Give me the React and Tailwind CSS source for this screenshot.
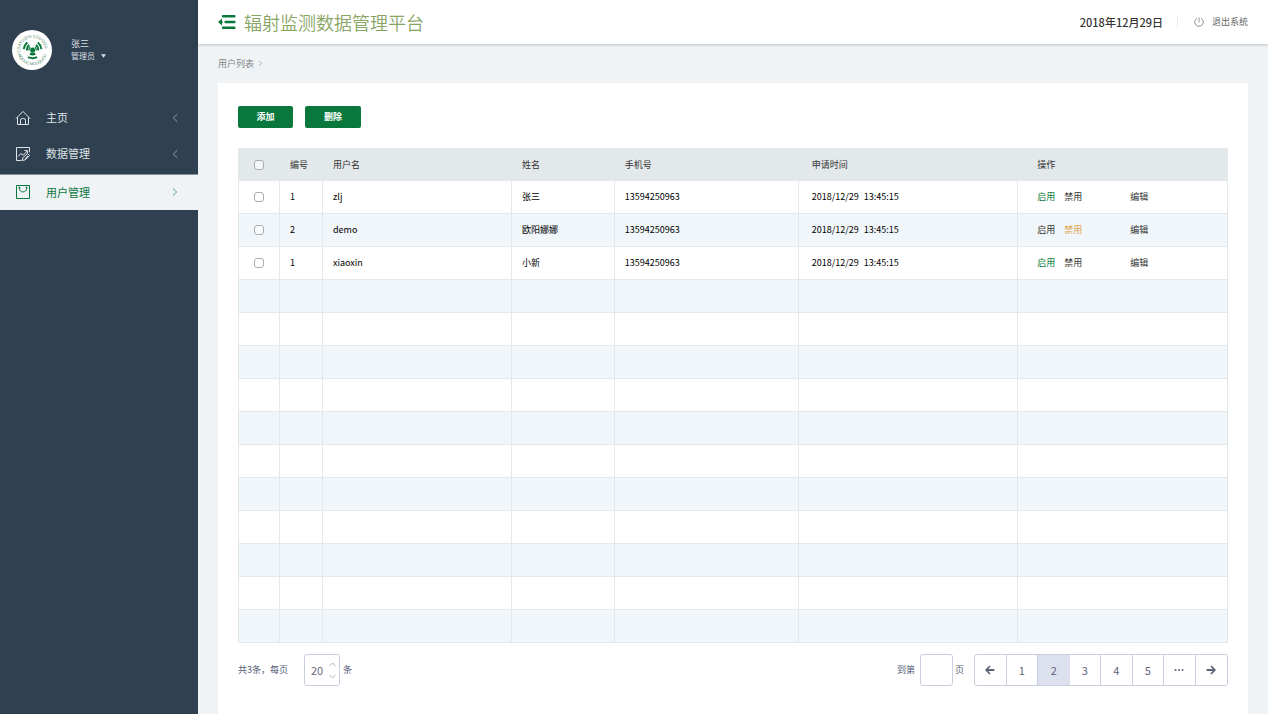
import React, { useState } from "react";

const users = [
  { no: "1", account: "zlj", name: "张三", phone: "13594250963", date: "2018/12/29", time: "13:45:15", enabled: true },
  { no: "2", account: "demo", name: "欧阳娜娜", phone: "13594250963", date: "2018/12/29", time: "13:45:15", enabled: false },
  { no: "1", account: "xiaoxin", name: "小新", phone: "13594250963", date: "2018/12/29", time: "13:45:15", enabled: true },
];
const emptyRows = Array.from({ length: 11 }, (_, i) => i);

function Logo() {
  return (
    <svg viewBox="0 0 40 40" className="size-10 shrink-0" aria-hidden="true">
      <defs>
        <path id="ring-top" d="M8 20a12.5 12.5 0 0 1 25 0" />
        <path id="ring-bottom" d="M5.4 20a15.1 15.1 0 0 0 30.2 0" />
      </defs>
      <circle cx="20" cy="20" r="20" fill="#fff" />
      <g fontFamily="Liberation Sans, sans-serif" fontSize="4" fill="#4c8564">
        <text><textPath href="#ring-top" startOffset="1%">DAYUQIG COUGOU</textPath></text>
        <text><textPath href="#ring-bottom" startOffset="2%">CAIQOUC MOUQUCO</textPath></text>
      </g>
      <circle cx="20.6" cy="20" r="2.5" fill="#0a783c" />
      <path d="M18.6 22.6h4l1.2 2.2q-3.2 1.4-6.4 0z" fill="#0a783c" />
      <g fill="none" stroke="#0a783c" strokeWidth="2">
        <path d="M17 20.6a4 4 0 0 1 1.2-3.6M24.2 20.6a4 4 0 0 0-1.2-3.6" strokeWidth="1.2" />
        <path d="M15 20.4a6.4 6.4 0 0 1 2.3-5.4M26.2 20.4a6.4 6.4 0 0 0-2.3-5.4" />
        <path d="M11.8 19.2a10 10 0 0 1 3.6-6.6M29.4 19.2a10 10 0 0 0-3.6-6.6" />
        <path d="M16 27.2q4.6 2 9.2 0" />
      </g>
    </svg>
  );
}

function HomeIcon() {
  return (
    <svg viewBox="0 0 16 16" className="size-4" fill="none" stroke="currentColor" strokeWidth="1" aria-hidden="true">
      <path d="M1.2 8.4 8 1.4l6.8 7M2.5 7.5v7h11v-7M5.5 14.3v-4.1q0-1.7 1.7-1.7h1.6q1.7 0 1.7 1.7v4.1" strokeLinejoin="round" strokeLinecap="round" />
    </svg>
  );
}

function DataIcon() {
  return (
    <svg viewBox="0 0 16 16" className="size-4" fill="none" stroke="currentColor" strokeWidth="1" strokeLinejoin="round" strokeLinecap="round" aria-hidden="true">
      <path d="M14.5 6V1.5h-13v13h4.6" />
      <path d="m3.3 10.2 2.4-2.6 2.6 1.6L12.2 5M9.8 4.6h2.6v2.6" />
      <path d="m8 11.6 4.6-4 2 2-4.5 4.3-2.5.5zM10.2 12.6l2.6-2.5" />
    </svg>
  );
}

function UserIcon() {
  return (
    <svg viewBox="0 0 16 16" className="size-4" fill="none" stroke="currentColor" strokeWidth="1" strokeLinejoin="round" aria-hidden="true">
      <path d="M1.5 1.5h13v13h-13z" />
      <path d="M4.4 4.2c.2 5 7 5 7.2 0" />
      <path d="M3.6 3.6h1.6M10.8 3.6h1.6" strokeWidth="1.6" />
    </svg>
  );
}

function Chevron({ d, className }) {
  return (
    <svg viewBox="0 0 8 8" className={className} fill="none" stroke="currentColor" strokeWidth="0.9" aria-hidden="true">
      <path d={d} />
    </svg>
  );
}
const LEFT = "M6.2 .4 2.2 4 6.2 7.6";
const RIGHT = "M1.8 .4 5.8 4 1.8 7.6";
const UP = "M.4 6 4 2.2 7.6 6";
const DOWN = "M.4 2 4 5.8 7.6 2";

function Arrow({ left }) {
  return (
    <svg viewBox="0 0 10 10" className="size-[10px]" fill="none" stroke="currentColor" strokeWidth="1.8" aria-hidden="true">
      {left ? <path d="M9.4 5H1.6M5 1 1.2 5 5 9" /> : <path d="M.6 5h7.8M5 1l3.8 4L5 9" />}
    </svg>
  );
}

function NavItem({ icon, label, active }) {
  return (
    <a
      href="#"
      aria-current={active ? "page" : undefined}
      className={
        active
          ? "mt-[2px] flex h-9 items-center border-t border-[#8392a0] bg-[#f0f3f6] pb-px pl-[15px] pr-[19px] text-[#0a783c]"
          : "flex h-9 items-center pb-px pl-[15px] pr-[19px] text-[#dfe4e8]"
      }
    >
      {icon}
      <span className="ml-[15px] flex-1 pb-px text-[11px] leading-4">{label}</span>
      <Chevron d={active ? RIGHT : LEFT} className={active ? "size-2 text-[#4f9c73]" : "size-2 text-[#94a1ad]"} />
    </a>
  );
}

function Check({ label }) {
  return (
    <input
      type="checkbox"
      aria-label={label}
      className="mx-auto block size-[10px] appearance-none rounded-[3px] border border-[#a9adb0] bg-white/60 checked:bg-[#0a783c]"
    />
  );
}

const cell = "border-b border-r border-[#e3e9eb] pl-[10px] text-left";
const head = "pl-[10px] text-left font-normal";
const page = "flex items-center justify-center border-r border-[#c9cfde] last:border-r-0";

export default function App() {
  const [size, setSize] = useState(20);
  return (
    <div className="flex min-h-screen bg-[#eff3f6] font-['Noto_Sans_CJK_SC',sans-serif] text-[9px] leading-3 text-[#333]">
      <aside className="w-[198px] shrink-0 bg-[#2f4050]">
        <div className="flex h-[100px] items-center gap-[19px] pl-3 text-[#d9dee3]">
          <Logo />
          <div>
            <div className="text-[9px] leading-3">张三</div>
            <button type="button" className="flex items-center gap-[6px] text-[8px] leading-3">
              管理员
              <svg viewBox="0 0 6 4" className="h-1 w-[5px]" fill="currentColor" aria-hidden="true"><path d="M0 0h6L3 4z" /></svg>
            </button>
          </div>
        </div>
        <nav>
          <NavItem icon={<HomeIcon />} label="主页" />
          <NavItem icon={<DataIcon />} label="数据管理" />
          <NavItem icon={<UserIcon />} label="用户管理" active />
        </nav>
      </aside>

      <div className="flex min-w-0 flex-1 flex-col">
        <header className="flex h-11 items-center bg-white px-5 shadow-[0_1px_3px_rgba(0,0,0,0.2)]">
          <button type="button" aria-label="收起菜单" className="text-[#0a783c]">
            <svg viewBox="0 0 18 14" className="h-[14px] w-[18px]" fill="currentColor" aria-hidden="true">
              <path d="M0 7l4-3.4v6.8z" />
              <path d="M5 1.2h11.4M7.6 7h8.8M5 12.8h11.4" fill="none" stroke="currentColor" strokeWidth="2.4" strokeLinecap="round" />
              <path d="M3 6.4h2v1.2H3z" />
            </svg>
          </button>
          <h1 className="ml-2 flex-1 text-[18px] font-[350] leading-6 text-[#87a562]">辐射监测数据管理平台</h1>
          <time className="text-[11px] font-medium leading-4 text-[#333]">2018年12月29日</time>
          <span className="ml-[14px] h-3 w-px bg-[#eceef0]" />
          <button type="button" className="ml-4 flex items-center gap-2 text-[#666]">
            <svg viewBox="0 0 10 10" className="size-[10px]" fill="none" stroke="#888" strokeWidth=".9" aria-hidden="true">
              <path d="M3 1.2a4.3 4.3 0 1 0 4 0M5 .4v5" />
            </svg>
            退出系统
          </button>
        </header>

        <div className="flex h-[39px] items-center gap-1 px-5 text-[#858585]">
          <a href="#">用户列表</a>
          <Chevron d={RIGHT} className="size-[5px]" />
        </div>

        <main className="mx-5 flex-1 bg-white px-5 pb-7 pt-[23px]">
          <div className="flex gap-3 font-bold text-white">
            <button type="button" className="h-[22px] w-[55px] rounded-[2px] bg-[#0a783c]">添加</button>
            <button type="button" className="h-[22px] w-[56px] rounded-[2px] bg-[#0a783c]">删除</button>
          </div>

          <table className="mt-5 w-full table-fixed border-separate border-spacing-0 border-l border-[#e3e9eb] text-black">
            <colgroup>
              <col className="w-[41px]" />
              <col className="w-[43px]" />
              <col className="w-[19.1%]" />
              <col className="w-[10.4%]" />
              <col className="w-[18.6%]" />
              <col className="w-[22.2%]" />
              <col />
            </colgroup>
            <thead className="bg-[#e3e8eb] text-[#333]">
              <tr className="h-[33px]">
                <th className="border-r border-transparent p-0"><Check label="全选" /></th>
                <th className={head}>编号</th>
                <th className={head}>用户名</th>
                <th className={head}>姓名</th>
                <th className={head}>手机号</th>
                <th className={head}>
                  <span className="pl-[3px]">申请时间</span>
                </th>
                <th className={head}><span className="pl-[9px]">操作</span></th>
              </tr>
            </thead>
            <tbody>
              {users.map((u) => (
                <tr key={u.account} className="h-[33px] even:bg-[#f0f6f9]">
                  <td className="border-b border-r border-[#e3e9eb] p-0"><Check label={"选择 " + u.account} /></td>
                  <td className={cell}>{u.no}</td>
                  <td className={cell}>{u.account}</td>
                  <td className={cell}>{u.name}</td>
                  <td className={cell}>{u.phone}</td>
                  <td className={cell}>
                    <span className="flex gap-[5px] pl-[3px]"><span>{u.date}</span><span>{u.time}</span></span>
                  </td>
                  <td className={cell}>
                    <div className="flex pl-[9px] text-[#333]">
                      <button type="button" className={u.enabled ? "text-[#0a783c]" : ""}>启用</button>
                      <button type="button" className={u.enabled ? "ml-[9px]" : "ml-[9px] text-[#e0a050]"}>禁用</button>
                      <button type="button" className="ml-12">编辑</button>
                    </div>
                  </td>
                </tr>
              ))}
              {emptyRows.map((i) => (
                <tr key={i} className="h-[33px] even:bg-[#f0f6f9]">
                  <td className={cell} /><td className={cell} /><td className={cell} /><td className={cell} />
                  <td className={cell} /><td className={cell} /><td className={cell} />
                </tr>
              ))}
            </tbody>
          </table>

          <div className="mt-[11px] flex items-center justify-between text-[#515a75]">
            <div className="flex items-center">
              <span>共3条，每页</span>
              <div className="ml-4 flex h-8 w-9 items-center rounded-[3px] border border-[#c9cfde] pl-[6px] pr-[3px]">
                <input
                  aria-label="每页条数"
                  value={size}
                  onChange={(e) => setSize(Number(e.target.value) || 0)}
                  className="w-[18px] text-[11px] leading-4 text-[#666b7c] outline-none"
                />
                <div className="flex flex-col gap-[5px] text-[#a0a4ae]">
                  <button type="button" aria-label="增加" onClick={() => setSize(size + 1)}><Chevron d={UP} className="size-[7px]" /></button>
                  <button type="button" aria-label="减少" onClick={() => setSize(Math.max(1, size - 1))}><Chevron d={DOWN} className="size-[7px]" /></button>
                </div>
              </div>
              <span className="ml-[3px]">条</span>
            </div>
            <div className="flex items-center">
              <label htmlFor="goto">到第</label>
              <input id="goto" className="ml-[5px] mr-[2px] h-8 w-[33px] rounded-[3px] border border-[#c9cfde] text-center text-[11px] outline-none" />
              <span>页</span>
              <nav aria-label="分页" className="ml-[10px] grid h-8 w-[254px] grid-cols-8 overflow-hidden rounded-[3px] border border-[#c9cfde] text-[11px] leading-4 text-[#5c6378]">
                <button type="button" aria-label="上一页" className={page}><Arrow left /></button>
                <button type="button" className={page}>1</button>
                <button type="button" aria-current="page" className="flex items-center justify-center bg-[#dde1ee]">2</button>
                <button type="button" className={page}>3</button>
                <button type="button" className={page}>4</button>
                <button type="button" className={page}>5</button>
                <button type="button" className={page}>
                  <svg viewBox="0 0 10 2" className="h-[2px] w-[10px]" fill="currentColor" aria-hidden="true">
                    <circle cx="1.5" cy="1" r="1" /><circle cx="5" cy="1" r="1" /><circle cx="8.5" cy="1" r="1" />
                  </svg>
                </button>
                <button type="button" aria-label="下一页" className={page}><Arrow /></button>
              </nav>
            </div>
          </div>
        </main>
      </div>
    </div>
  );
}
